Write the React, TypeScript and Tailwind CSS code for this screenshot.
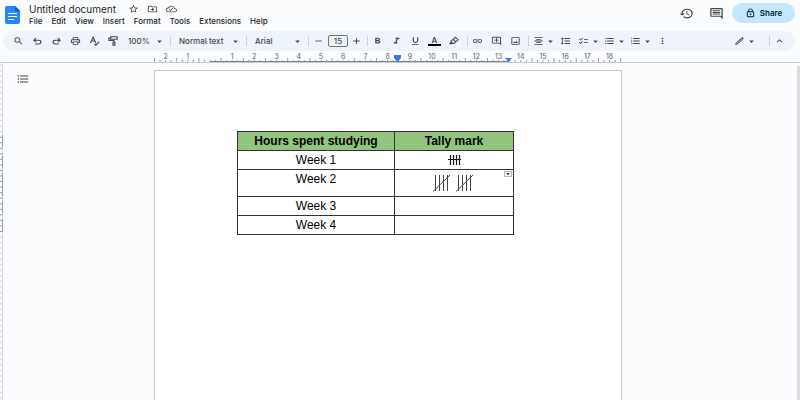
import React from 'react';
import {
  MdAdd,
  MdArrowDropDown,
  MdExpandLess,
  MdFormatAlignCenter,
  MdFormatBold,
  MdFormatItalic,
  MdFormatLineSpacing,
  MdFormatListBulleted,
  MdFormatListNumbered,
  MdFormatUnderlined,
  MdHistory,
  MdLink,
  MdMoreVert,
  MdOutlineAddComment,
  MdOutlineChecklist,
  MdOutlineCloudDone,
  MdOutlineComment,
  MdOutlineDriveFileMove,
  MdOutlineEdit,
  MdOutlineImage,
  MdOutlineLock,
  MdOutlinePrint,
  MdRemove,
  MdSearch,
  MdStarBorder,
} from 'react-icons/md';

type Icon = React.ComponentType<React.SVGProps<SVGSVGElement>>;

const menus = ['File', 'Edit', 'View', 'Insert', 'Format', 'Tools', 'Extensions', 'Help'];

const rows = [
  { label: 'Week 1', tally: 'small' },
  { label: 'Week 2', tally: 'large' },
  { label: 'Week 3', tally: '' },
  { label: 'Week 4', tally: '' },
];

// Ruler scale in pixels per centimetre, and where zero sits
const CM = 22.2;
const ZERO = 56;

const strokeProps = { viewBox: '0 0 24 24', fill: 'none', stroke: 'currentColor', strokeWidth: 2.5 };

const UndoIcon: Icon = (props) => (
  <svg {...strokeProps} {...props}>
    <path d="M9 5L4 10l5 5M4 10h11a4.500 4.500 0 0 1 0 9H7" />
  </svg>
);

const RedoIcon: Icon = (props) => (
  <svg {...strokeProps} {...props}>
    <path d="M15 5l5 5-5 5M20 10H9a4.500 4.500 0 0 0 0 9h8" />
  </svg>
);

const SpellIcon: Icon = (props) => (
  <svg {...strokeProps} {...props}>
    <path d="M3 17L9 3l6 14M5 12h8M12 19l3 3 7-8" />
  </svg>
);

const PaintIcon: Icon = (props) => (
  <svg {...strokeProps} {...props}>
    <path d="M6 2h14v6H6zM6 5H2v6h11v4M11 15h4v7h-4z" />
  </svg>
);

const HighlightIcon: Icon = (props) => (
  <svg {...strokeProps} {...props}>
    <path d="M7 12l9-9 6 6-9 9H7zM11 8l6 6" />
    <path d="M7 13l-5 7h6l4-3z" fill="currentColor" stroke="none" />
  </svg>
);

const ToolButton = ({ icon: Glyph, label, className = 'w-[19px]' }: { icon: Icon; label: string; className?: string }) => (
  <button type="button" aria-label={label} className={`flex h-4 shrink-0 items-center justify-center ${className}`}>
    <Glyph className="h-[10px] w-[11px]" preserveAspectRatio="none" />
  </button>
);

const MenuButton = ({ icon: Glyph, label, className = 'ml-[3px]' }: { icon: Icon; label: string; className?: string }) => (
  <button type="button" aria-label={label} className={`flex h-4 shrink-0 items-center gap-px ${className}`}>
    <Glyph className="h-[10px] w-[11px]" preserveAspectRatio="none" />
    <MdArrowDropDown className="size-[11px]" />
  </button>
);

const ToolSelect = ({ label, value, className }: { label: string; value: string; className: string }) => (
  <label className={`relative block shrink-0 ${className}`}>
    <select aria-label={label} className="block w-full appearance-none bg-transparent text-[8px] leading-4 font-medium">
      <option>{value}</option>
    </select>
    <MdArrowDropDown className="pointer-events-none absolute top-[3px] right-0 size-[11px]" />
  </label>
);

const Divider = ({ className = 'ml-[5px]' }: { className?: string }) => (
  <span className={`h-[10px] w-px shrink-0 bg-[#cdd1d8] ${className}`} />
);

const Ruler = () => {
  const ticks = Array.from({ length: 85 }, (_, i) => i - 10);
  const labels = [-2, -1, ...Array.from({ length: 18 }, (_, i) => i + 1)];

  return (
    <svg className="block h-[11px] w-[468px]" viewBox="0 0 468 11" aria-hidden="true">
      {ticks.map((t) => (
        <line
          key={t}
          x1={ZERO + (t * CM) / 4}
          x2={ZERO + (t * CM) / 4}
          y1={t % 4 !== 0 && t % 2 === 0 ? 7 : 9}
          y2={11}
          stroke="#9aa0a6"
        />
      ))}
      {labels.map((n) => (
        <text key={n} x={ZERO + n * CM} y="8" textAnchor="middle" fontSize="7" fill="#5f6368">
          {Math.abs(n)}
        </text>
      ))}
      <path d="M56 10.500H354" stroke="#80868b" />
      <path d="M240 4h7v3l-3.500 4-3.500-4z" fill="#3b78e7" />
      <path d="M351 7h7l-3.500 4z" fill="#3b78e7" />
    </svg>
  );
};

const SideRuler = () => (
  <svg className="h-[337px] w-[3px] shrink-0" viewBox="0 0 3 337" aria-hidden="true">
    <path d="M2.500 0v337" stroke="#d5d8dc" />
    {Array.from({ length: 61 }, (_, i) => (
      <path key={i} d={`M0 ${i * 5.55 + 2}h3`} stroke={i > 12 && i < 31 ? '#9aa0a6' : '#d5d8dc'} />
    ))}
    <path d="M2.500 72v12M2.500 93v12M2.500 110v23M2.500 138v12M2.500 156v12" stroke="#9aa0a6" />
  </svg>
);

const SmallTally = () => (
  <svg className="mx-auto block h-[10px] w-[13px]" viewBox="0 0 13 10" fill="none" stroke="#111" role="img" aria-label="5">
    <path d="M2.500 0v10M5.500 0v10M8.500 0v10M11.500 0v10M0 4.500h13" strokeWidth="1.200" />
  </svg>
);

const LargeTally = () => (
  <svg className="mx-auto block h-[18px] w-[42px]" viewBox="0 0 42 18" fill="none" stroke="#444" role="img" aria-label="10">
    <path d="M2.500 1v16M6.500 1v16M10.500 1v16M14.500 1v16M0 17.500L17 1" />
    <path d="M25.500 1v16M29.500 1v16M33.500 1v16M37.500 1v16M23 17.500L40 1" />
  </svg>
);

const Header = () => (
  <header className="flex h-[31px] shrink-0 items-start px-[5px]">
    <svg className="mt-[6px] h-[18px] w-[16px] shrink-0" viewBox="0 0 16 18" role="img" aria-label="Docs">
      <path d="M2 0h8l5 5v11a2 2 0 0 1-2 2H2a2 2 0 0 1-2-2V2a2 2 0 0 1 2-2z" fill="#2684fc" />
      <path d="M10 0l5 5h-5z" fill="#0b5bd0" />
      <path d="M3 7.500h9M3 10.500h9M3 13.500h6" stroke="#fff" />
    </svg>
    <div className="ml-2 flex-1 pt-[2px]">
      <div className="flex h-[14px] items-center">
        <h1 className="text-[10px] leading-[14px]">Untitled document</h1>
        <div className="ml-2 flex text-[#444746]">
          <ToolButton icon={MdStarBorder} label="Star" />
          <ToolButton icon={MdOutlineDriveFileMove} label="Move" />
          <ToolButton icon={MdOutlineCloudDone} label="Document status" />
        </div>
      </div>
      <nav className="flex gap-[9px] text-[8px] leading-[11px] font-medium">
        {menus.map((menu) => (
          <button key={menu} type="button">{menu}</button>
        ))}
      </nav>
    </div>
    <div className="flex items-center pt-[3px] text-[#444746]">
      <button type="button" aria-label="Version history" className="mr-[15px]">
        <MdHistory className="h-[13px] w-[15px]" preserveAspectRatio="none" />
      </button>
      <button type="button" aria-label="Comments" className="mr-2">
        <MdOutlineComment className="h-[13px] w-[15px]" preserveAspectRatio="none" />
      </button>
      <button type="button" className="flex h-5 w-[63px] items-center justify-center gap-1 rounded-full bg-[#c2e7ff] text-[8px] font-semibold text-[#001d35]">
        <MdOutlineLock className="h-[10px] w-[11px]" preserveAspectRatio="none" />
        Share
      </button>
    </div>
  </header>
);

const Toolbar = () => (
  <div className="mr-[5px] ml-[3px] flex h-5 shrink-0 items-center rounded-full bg-[#eff3fa] px-[6px] text-[#444746]">
    <ToolButton icon={MdSearch} label="Search the menus" />
    <ToolButton icon={UndoIcon} label="Undo" />
    <ToolButton icon={RedoIcon} label="Redo" />
    <ToolButton icon={MdOutlinePrint} label="Print" />
    <ToolButton icon={SpellIcon} label="Spelling and grammar check" />
    <ToolButton icon={PaintIcon} label="Paint format" />
    <ToolSelect label="Zoom" value="100%" className="ml-[5px] w-[37px]" />
    <Divider />
    <ToolSelect label="Styles" value="Normal text" className="ml-2 w-[62px]" />
    <Divider />
    <ToolSelect label="Font" value="Arial" className="ml-2 w-[48px]" />
    <Divider />
    <ToolButton icon={MdRemove} label="Decrease font size" className="ml-1 w-[11px]" />
    <input
      aria-label="Font size"
      defaultValue="15"
      className="ml-[4px] h-3 w-5 shrink-0 rounded-[2px] border border-[#747775] bg-transparent text-center text-[8px] font-medium"
    />
    <ToolButton icon={MdAdd} label="Increase font size" className="ml-[3px] w-[11px]" />
    <Divider />
    <ToolButton icon={MdFormatBold} label="Bold" />
    <ToolButton icon={MdFormatItalic} label="Italic" />
    <ToolButton icon={MdFormatUnderlined} label="Underline" />
    <button type="button" aria-label="Text color" className="flex h-4 w-[19px] shrink-0 flex-col items-center justify-center">
      <span className="text-[8px] leading-[8px] font-semibold">A</span>
      <span className="h-[2px] w-[13px] bg-black" />
    </button>
    <ToolButton icon={HighlightIcon} label="Highlight color" />
    <Divider className="ml-[4px]" />
    <ToolButton icon={MdLink} label="Insert link" />
    <ToolButton icon={MdOutlineAddComment} label="Add comment" />
    <ToolButton icon={MdOutlineImage} label="Insert image" />
    <Divider className="ml-[3px]" />
    <MenuButton icon={MdFormatAlignCenter} label="Align" className="ml-[4px]" />
    <ToolButton icon={MdFormatLineSpacing} label="Line spacing" />
    <MenuButton icon={MdOutlineChecklist} label="Checklist" />
    <MenuButton icon={MdFormatListBulleted} label="Bulleted list" />
    <MenuButton icon={MdFormatListNumbered} label="Numbered list" />
    <ToolButton icon={MdMoreVert} label="More" />
    <MenuButton icon={MdOutlineEdit} label="Editing mode" className="ml-auto" />
    <Divider className="ml-3" />
    <ToolButton icon={MdExpandLess} label="Hide the menus" />
  </div>
);

const TallyTable = () => (
  <table className="w-[277px] table-fixed border-collapse text-center font-['Liberation_Sans',Arial,sans-serif] text-[12px] leading-[18px] text-black">
    <thead>
      <tr className="bg-[#93c47d]">
        <th className="w-[157px] border border-[#333] p-0">Hours spent studying</th>
        <th className="border border-[#333] p-0">Tally mark</th>
      </tr>
    </thead>
    <tbody>
      {rows.map((row) => (
        <tr key={row.label} className={row.tally === 'large' ? 'h-[27px]' : 'h-[19px]'}>
          <td className="border border-[#333] p-0 align-top">{row.label}</td>
          <td className="relative border border-[#333] p-0 align-middle">
            {row.tally === 'small' && <SmallTally />}
            {row.tally === 'large' && (
              <>
                <LargeTally />
                <button
                  type="button"
                  aria-label="Cell options"
                  className="absolute top-px right-px flex h-[6px] w-2 items-center justify-center border border-[#bbb] bg-[#f3f3f3]"
                >
                  <MdArrowDropDown className="size-2 shrink-0" />
                </button>
              </>
            )}
          </td>
        </tr>
      ))}
    </tbody>
  </table>
);

const App = () => (
  <div className="flex h-screen flex-col overflow-hidden bg-[#fafcfe] font-[Inter,sans-serif] text-[#1f1f1f]">
    <Header />
    <Toolbar />
    <div className="flex shrink-0 justify-center pr-6">
      <Ruler />
    </div>
    <div className="flex min-h-0 flex-1 border-t border-[#c7cacf]">
      <SideRuler />
      <button type="button" aria-label="Show outline" className="mt-[10px] ml-[13px] h-3 w-3 shrink-0 text-[#444746]">
        <MdFormatListBulleted className="h-3 w-[14px]" preserveAspectRatio="none" />
      </button>
      {/* Document page */}
      <main className="flex flex-1 justify-center pt-[7px] pr-[49px]">
        <div className="h-full w-[468px] border border-b-0 border-[#c7c7c7] bg-white pt-[60px] pl-[82px]">
          <TallyTable />
        </div>
      </main>
      <div className="mt-[3px] w-[3px] shrink-0 bg-[#dadce0]" />
    </div>
  </div>
);

export default App;
